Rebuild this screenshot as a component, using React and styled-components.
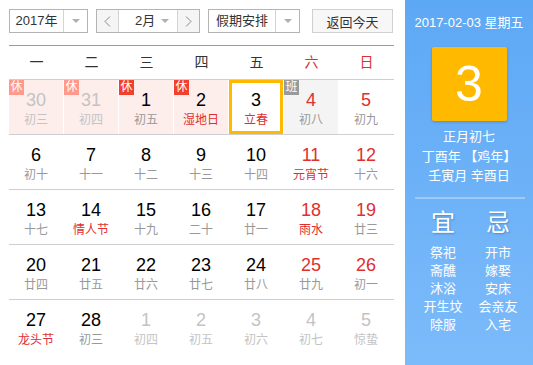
import React from 'react';
import styled, { createGlobalStyle } from 'styled-components';

const GlobalStyle = createGlobalStyle`
  html, body { margin: 0; padding: 0; background: #fff; }
  body { font-family: "Liberation Sans", Arial, "Noto Sans CJK SC", sans-serif; }
  * { box-sizing: border-box; }
`;

const weekDays = ['一', '二', '三', '四', '五', '六', '日'];

// kind: prev/next = other month, badge: rest | work
const weeks = [
  [
    { d: 30, l: '初三', faded: true, badge: 'rest', bg: 'pink' },
    { d: 31, l: '初四', faded: true, badge: 'rest', bg: 'pink' },
    { d: 1, l: '初五', badge: 'rest', bg: 'pink' },
    { d: 2, l: '湿地日', fest: true, badge: 'rest', bg: 'pink' },
    { d: 3, l: '立春', fest: true, selected: true },
    { d: 4, l: '初八', badge: 'work', bg: 'gray' },
    { d: 5, l: '初九' },
  ],
  [
    { d: 6, l: '初十' }, { d: 7, l: '十一' }, { d: 8, l: '十二' }, { d: 9, l: '十三' },
    { d: 10, l: '十四' }, { d: 11, l: '元宵节', fest: true }, { d: 12, l: '十六' },
  ],
  [
    { d: 13, l: '十七' }, { d: 14, l: '情人节', fest: true }, { d: 15, l: '十九' }, { d: 16, l: '二十' },
    { d: 17, l: '廿一' }, { d: 18, l: '雨水', fest: true }, { d: 19, l: '廿三' },
  ],
  [
    { d: 20, l: '廿四' }, { d: 21, l: '廿五' }, { d: 22, l: '廿六' }, { d: 23, l: '廿七' },
    { d: 24, l: '廿八' }, { d: 25, l: '廿九' }, { d: 26, l: '初一' },
  ],
  [
    { d: 27, l: '龙头节', fest: true }, { d: 28, l: '初三' },
    { d: 1, l: '初四', faded: true }, { d: 2, l: '初五', faded: true }, { d: 3, l: '初六', faded: true },
    { d: 4, l: '初七', faded: true }, { d: 5, l: '惊蛰', faded: true },
  ],
];

const yi = ['祭祀', '斋醮', '沐浴', '开生坟', '除服'];
const ji = ['开市', '嫁娶', '安床', '会亲友', '入宅'];

const Page = styled.div`
  display: flex;
  width: 533px;
  height: 365px;
  overflow: hidden;
`;

const Main = styled.div`
  width: 405px;
  padding: 9px 11px 0 9px;
`;

const Toolbar = styled.div`
  display: flex;
  height: 24px;
  margin-bottom: 12px;
`;

const Select = styled.div`
  display: flex;
  width: ${p => p.$w}px;
  height: 24px;
  margin-right: ${p => p.$mr || 0}px;
  border: 1px solid #b4b4b4;
  background: #fff;
  font-size: 13px;
  color: #333;
`;

const SelectText = styled.div`
  flex: 1;
  display: flex;
  align-items: center;
  justify-content: ${p => p.$between ? 'space-between' : 'center'};
  padding: ${p => p.$between ? '0 8px 0 16px' : '0'};
  line-height: 22px;
`;

const Caret = styled.div`
  width: 24px;
  border-left: 1px solid #d4d4d4;
  display: flex;
  align-items: center;
  justify-content: center;
`;

const Tri = styled.span`
  width: 0;
  height: 0;
  border-left: 4px solid transparent;
  border-right: 4px solid transparent;
  border-top: 4px solid #b0b0b0;
`;

const ArrowBtn = styled.div`
  width: 22px;
  background: #f5f5f5;
  display: flex;
  align-items: center;
  justify-content: center;
  border-${p => p.$side}: 1px solid #d4d4d4;
`;

const TodayBtn = styled.div`
  width: 81px;
  height: 24px;
  border: 1px solid #d0d0d0;
  background: #f7f7f7;
  font-size: 13px;
  color: #333;
  display: flex;
  align-items: center;
  justify-content: center;
`;

const Grid = styled.div`
  width: 385px;
  border-top: 1px solid #5fa8f5;
`;

const HeadRow = styled.div`
  display: grid;
  grid-template-columns: repeat(7, 55px);
  height: 34px;
  border-bottom: 1px solid #cfcfcf;
`;

const HeadCell = styled.div`
  text-align: center;
  line-height: 33px;
  font-size: 14px;
  color: ${p => p.$weekend ? '#e02f2f' : '#333'};
`;

const Row = styled.div`
  display: grid;
  grid-template-columns: repeat(7, 55px);
  height: 55px;
  border-bottom: ${p => p.$last ? 'none' : '1px solid #cfcfcf'};
`;

const Cell = styled.div`
  position: relative;
  margin-right: 1px;
  padding-top: 10px;
  text-align: center;
  background: ${p => p.$bg === 'pink' ? '#fdeeec' : p.$bg === 'gray' ? '#f4f4f4' : 'transparent'};
  box-shadow: ${p => p.$selected ? 'inset 0 0 0 3px #ffb900' : 'none'};
`;

const Num = styled.div`
  font-size: 18px;
  line-height: 20px;
  color: ${p => p.$faded ? '#c3c3c3' : p.$weekend ? '#e02f2f' : '#000'};
`;

const Lunar = styled.div`
  margin-top: 2px;
  font-size: 12px;
  line-height: 16px;
  white-space: nowrap;
  color: ${p => p.$faded ? '#c3c3c3' : p.$fest ? '#e02f2f' : '#999'};
`;

const Badge = styled.span`
  position: absolute;
  left: 0;
  top: 0;
  width: 15px;
  height: 15px;
  font-size: 12px;
  line-height: 15px;
  text-align: center;
  color: #fff;
  background: ${p => p.$kind === 'work' ? '#9a9a9a' : p.$faded ? '#ff998c' : '#f2402f'};
`;

const Side = styled.div`
  width: 128px;
  height: 365px;
  padding-top: 13px;
  background: linear-gradient(#5da8f5, #7cbbfa);
  color: #fff;
  text-align: center;
`;

const SideDate = styled.div`
  font-size: 13px;
  line-height: 20px;
`;

const BigDay = styled.div`
  width: 75px;
  height: 74px;
  margin: 14px auto 0;
  border-radius: 2px;
  background: #ffba00;
  box-shadow: 0 1px 3px rgba(0, 0, 0, 0.2);
  font-size: 50px;
  line-height: 74px;
`;

const LunarInfo = styled.div`
  margin-top: 6px;
  font-size: 13px;
  line-height: 19.5px;
`;

const Divider = styled.div`
  height: 2px;
  margin: 11px 8px 0 10px;
  background: #9ccbfa;
`;

const Advice = styled.div`
  display: grid;
  grid-template-columns: 55px 55px;
  justify-content: center;
  padding-left: 3px;
  margin-top: 9px;
`;

const AdviceCol = styled.div`
  display: flex;
  flex-direction: column;
  align-items: center;
`;

const AdviceHead = styled.div`
  font-size: 24px;
  line-height: 30px;
  margin-bottom: 6px;
  text-shadow: 1px 1px 2px rgba(0, 0, 50, 0.25);
`;

const AdviceItem = styled.div`
  font-size: 13px;
  line-height: 18px;
  white-space: nowrap;
`;

function Chevron({ dir }) {
  return (
    <svg width="7" height="11" viewBox="0 0 7 11">
      <polyline
        points={dir === 'left' ? '6,0.5 1,5.5 6,10.5' : '1,0.5 6,5.5 1,10.5'}
        fill="none"
        stroke="#888"
        strokeWidth="1"
      />
    </svg>
  );
}

export default function App() {
  return (
    <Page>
      <GlobalStyle />
      <Main>
        <Toolbar>
          <Select $w={79} $mr={8}>
            <SelectText>2017年</SelectText>
            <Caret><Tri /></Caret>
          </Select>
          <Select $w={104} $mr={8}>
            <ArrowBtn $side="right"><Chevron dir="left" /></ArrowBtn>
            <SelectText $between>2月<Tri /></SelectText>
            <ArrowBtn $side="left"><Chevron dir="right" /></ArrowBtn>
          </Select>
          <Select $w={92} $mr={12}>
            <SelectText>假期安排</SelectText>
            <Caret><Tri /></Caret>
          </Select>
          <TodayBtn>返回今天</TodayBtn>
        </Toolbar>
        <Grid>
          <HeadRow>
            {weekDays.map((w, i) => (
              <HeadCell key={w} $weekend={i > 4}>{w}</HeadCell>
            ))}
          </HeadRow>
          {weeks.map((week, ri) => (
            <Row key={ri} $last={ri === weeks.length - 1}>
              {week.map((c, ci) => (
                <Cell key={ci} $bg={c.bg} $selected={c.selected}>
                  {c.badge && (
                    <Badge $kind={c.badge} $faded={c.faded}>
                      {c.badge === 'work' ? '班' : '休'}
                    </Badge>
                  )}
                  <Num $faded={c.faded} $weekend={ci > 4}>{c.d}</Num>
                  <Lunar $faded={c.faded} $fest={c.fest}>{c.l}</Lunar>
                </Cell>
              ))}
            </Row>
          ))}
        </Grid>
      </Main>
      <Side>
        <SideDate>2017-02-03 星期五</SideDate>
        <BigDay>3</BigDay>
        <LunarInfo>
          <div>正月初七</div>
          <div>丁酉年 【鸡年】</div>
          <div>壬寅月 辛酉日</div>
        </LunarInfo>
        <Divider />
        <Advice>
          <AdviceCol>
            <AdviceHead>宜</AdviceHead>
            {yi.map(t => <AdviceItem key={t}>{t}</AdviceItem>)}
          </AdviceCol>
          <AdviceCol>
            <AdviceHead>忌</AdviceHead>
            {ji.map(t => <AdviceItem key={t}>{t}</AdviceItem>)}
          </AdviceCol>
        </Advice>
      </Side>
    </Page>
  );
}
